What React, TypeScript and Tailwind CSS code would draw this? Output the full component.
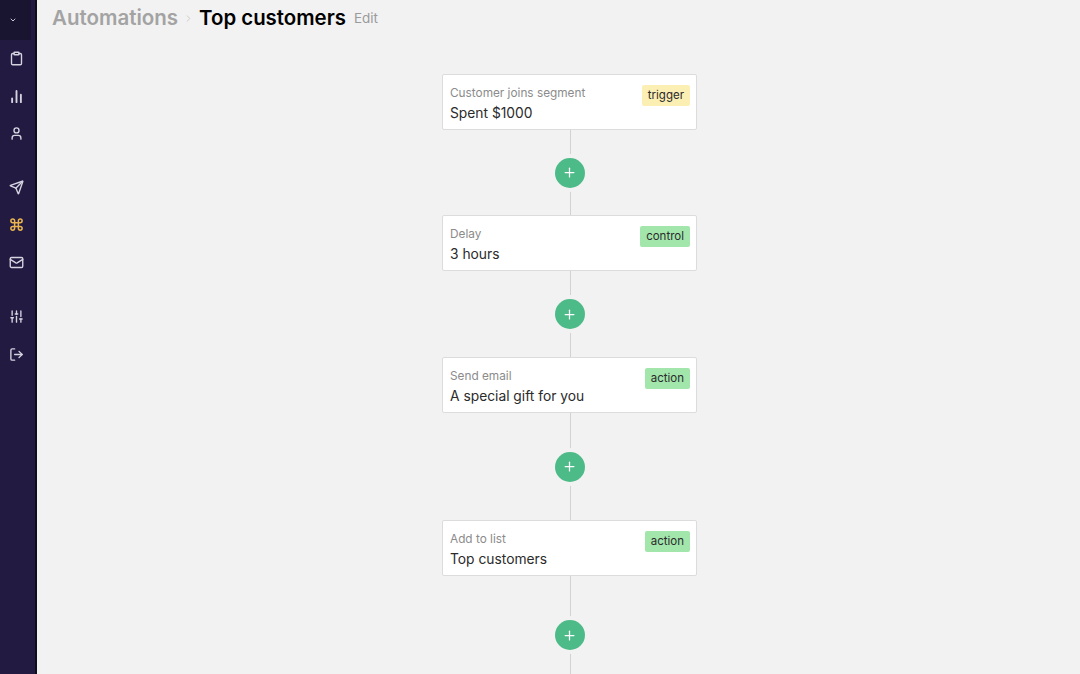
import { BarChart2, ChevronDown, ChevronRight, Clipboard, Command, LogOut, Mail, Plus, Send, SlidersVertical, User } from "lucide-react"

const CARDS = [
  { label: "Customer joins segment", title: "Spent $1000", tag: "trigger", tagClass: "bg-[#fcefb4]", gap: "h-[85px]" },
  { label: "Delay", title: "3 hours", tag: "control", tagClass: "bg-[#a3e6ac]", gap: "h-[86px]" },
  { label: "Send email", title: "A special gift for you", tag: "action", tagClass: "bg-[#a3e6ac]", gap: "h-[107px]" },
  { label: "Add to list", title: "Top customers", tag: "action", tagClass: "bg-[#a3e6ac]", gap: "h-[118px]" },
]

function NavIcon({ children }: { children: React.ReactNode }) {
  return <div className="flex h-[37.5px] w-[32px] items-center justify-center">{children}</div>
}

function Sidebar() {
  const icon = "h-[15px] w-[15px] text-[#d5d3e0]"
  return (
    <aside className="flex h-full w-[37px] shrink-0 flex-col border-r-2 border-[#0f0c1c] bg-[#221a40]">
      <div className="flex h-[40px] w-[31px] items-center justify-center bg-[#191430] pr-[5px]">
        <ChevronDown className="h-[8px] w-[8px] text-[#c9c7d4]" strokeWidth={3} />
      </div>
      <NavIcon>
        <Clipboard className={icon} strokeWidth={2.2} />
      </NavIcon>
      <NavIcon>
        <BarChart2 className={icon} strokeWidth={3} />
      </NavIcon>
      <NavIcon>
        <User className={icon} strokeWidth={2.2} />
      </NavIcon>
      <div className="h-[16px]" />
      <NavIcon>
        <Send className={icon} strokeWidth={2.2} />
      </NavIcon>
      <NavIcon>
        <Command className="h-[15px] w-[15px] text-[#e9b44f]" strokeWidth={2.4} />
      </NavIcon>
      <NavIcon>
        <Mail className={icon} strokeWidth={2.2} />
      </NavIcon>
      <div className="h-[17px]" />
      <NavIcon>
        <SlidersVertical className={icon} strokeWidth={2.2} />
      </NavIcon>
      <NavIcon>
        <LogOut className={icon} strokeWidth={2.2} />
      </NavIcon>
    </aside>
  )
}

function Connector({ gap }: { gap: string }) {
  return (
    <div className={`relative flex w-full items-center justify-center ${gap}`}>
      <div className="absolute inset-y-0 left-1/2 w-px bg-[#d2d2d2]" />
      <button className="relative flex h-[30px] w-[30px] items-center justify-center rounded-full bg-[#4cbb87] shadow-[0_0_0_4px_#f2f2f2]">
        <Plus className="h-[15px] w-[15px] text-white" strokeWidth={2} />
      </button>
    </div>
  )
}

export default function App() {
  return (
    <div className="flex h-[674px] w-[1080px] overflow-hidden bg-[#f2f2f2] font-['Inter',sans-serif]">
      <Sidebar />
      <main className="flex-1">
        <header className="flex h-[36px] items-center pl-[15px]">
          <span className="text-[20.5px] font-semibold text-[#a3a3a3]">Automations</span>
          <ChevronRight className="mx-[5px] h-[11px] w-[11px] text-[#c9c9c9]" />
          <span className="text-[20.4px] font-semibold text-black">Top customers</span>
          <span className="ml-[8px] text-[13.5px] text-[#9b9b9b]">Edit</span>
        </header>
        <div className="ml-[405px] mt-[38px] flex w-[255px] flex-col">
          {CARDS.map((card) => (
            <div key={card.label + card.title}>
              <div className="flex h-[56px] items-start justify-between rounded-[2px] border border-[#dcdcdc] bg-white pl-[7px] pr-[6px]">
                <div>
                  <div className="mt-[9px] text-[11.8px] leading-[18px] text-[#8b8b8b]">{card.label}</div>
                  <div className="mt-[1px] text-[13.8px] leading-[20px] text-[#2b2b2b]">{card.title}</div>
                </div>
                <span className={`mt-[10px] flex h-[21px] items-center rounded-[2px] px-[6px] text-[11.5px] text-[#2b2b2b] ${card.tagClass}`}>
                  {card.tag}
                </span>
              </div>
              <Connector gap={card.gap} />
            </div>
          ))}
        </div>
      </main>
    </div>
  )
}
